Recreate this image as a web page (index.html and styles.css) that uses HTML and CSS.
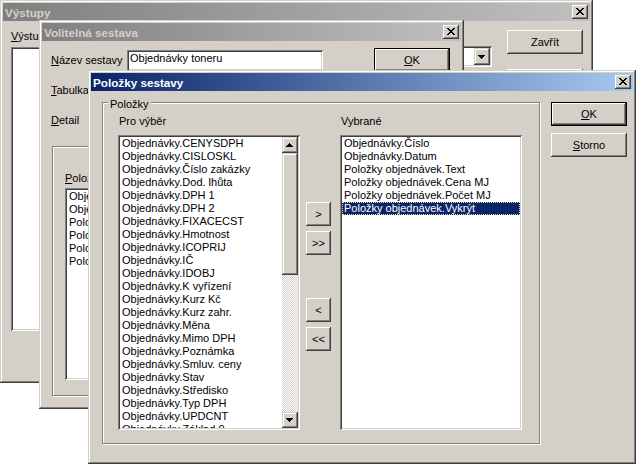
FILE: index.html
```html
<!DOCTYPE html>
<html lang="cs">
<head>
<meta charset="utf-8">
<title>Položky sestavy</title>
<link rel="stylesheet" href="styles.css">
</head>
<body>
<div class="desktop">

  <section class="win win-out">
    <header class="titlebar inactive">
      <span class="title">Výstupy</span>
      <span class="xbtn"><svg width="8" height="7" viewBox="0 0 8 7"><path d="M0 0h2v1h-2z M6 0h2v1h-2z M1 1h2v1h-2z M5 1h2v1h-2z M2 2h4v1h-4z M3 3h2v1h-2z M2 4h4v1h-4z M1 5h2v1h-2z M5 5h2v1h-2z M0 6h2v1h-2z M6 6h2v1h-2z" fill="#000"/></svg></span>
    </header>
    <div class="out-body">
      <div class="out-left">
        <div class="lbl"><u>V</u>ýstupy</div>
        <div class="sunken out-list"></div>
      </div>
      <div class="out-mid">
        <div class="sunken combo">
          <span class="combo-val"></span>
          <span class="arrow-btn"><svg width="7" height="4" viewBox="0 0 7 4"><path d="M0 0h7v1h-1v1h-1v1h-1v1h-1v-1h-1v-1h-1v-1h-1z" fill="#000"/></svg></span>
        </div>
      </div>
      <div class="out-right">
        <button class="btn">Zavřít</button>
        <button class="btn next"></button>
      </div>
    </div>
  </section>

  <section class="win win-opt">
    <header class="titlebar inactive">
      <span class="title">Volitelná sestava</span>
      <span class="xbtn"><svg width="8" height="7" viewBox="0 0 8 7"><path d="M0 0h2v1h-2z M6 0h2v1h-2z M1 1h2v1h-2z M5 1h2v1h-2z M2 2h4v1h-4z M3 3h2v1h-2z M2 4h4v1h-4z M1 5h2v1h-2z M5 5h2v1h-2z M0 6h2v1h-2z M6 6h2v1h-2z" fill="#000"/></svg></span>
    </header>
    <div class="opt-body">
      <div class="row row-name">
        <span class="row-lbl"><u>N</u>ázev sestavy</span>
        <span class="sunken textbox">Objednávky toneru</span>
        <button class="btn default opt-ok"><u>O</u>K</button>
      </div>
      <div class="row row-field">
        <span class="row-lbl"><u>T</u>abulka</span>
        <span class="sunken textbox"></span>
      </div>
      <div class="row row-field">
        <span class="row-lbl"><u>D</u>etail</span>
        <span class="sunken textbox"></span>
      </div>
      <div class="group opt-group">
        <div class="lbl"><u>P</u>olož</div>
        <div class="sunken opt-list">
          <div class="item">Obje</div>
          <div class="item">Obje</div>
          <div class="item">Polo</div>
          <div class="item">Polo</div>
          <div class="item">Polo</div>
          <div class="item">Polo</div>
        </div>
      </div>
    </div>
  </section>

  <section class="win win-items">
    <header class="titlebar">
      <span class="title">Položky sestavy</span>
      <span class="xbtn"><svg width="8" height="7" viewBox="0 0 8 7"><path d="M0 0h2v1h-2z M6 0h2v1h-2z M1 1h2v1h-2z M5 1h2v1h-2z M2 2h4v1h-4z M3 3h2v1h-2z M2 4h4v1h-4z M1 5h2v1h-2z M5 5h2v1h-2z M0 6h2v1h-2z M6 6h2v1h-2z" fill="#000"/></svg></span>
    </header>
    <div class="items-body">
      <div class="group items-group">
        <span class="legend">Položky</span>
        <div class="list-col">
          <div class="col-lbl">Pro výběr</div>
          <div class="sunken listbox">
            <div class="items">
              <div class="item">Objednávky.CENYSDPH</div>
              <div class="item">Objednávky.CISLOSKL</div>
              <div class="item">Objednávky.Číslo zakázky</div>
              <div class="item">Objednávky.Dod. lhůta</div>
              <div class="item">Objednávky.DPH 1</div>
              <div class="item">Objednávky.DPH 2</div>
              <div class="item">Objednávky.FIXACECST</div>
              <div class="item">Objednávky.Hmotnost</div>
              <div class="item">Objednávky.ICOPRIJ</div>
              <div class="item">Objednávky.IČ</div>
              <div class="item">Objednávky.IDOBJ</div>
              <div class="item">Objednávky.K vyřízení</div>
              <div class="item">Objednávky.Kurz Kč</div>
              <div class="item">Objednávky.Kurz zahr.</div>
              <div class="item">Objednávky.Měna</div>
              <div class="item">Objednávky.Mimo DPH</div>
              <div class="item">Objednávky.Poznámka</div>
              <div class="item">Objednávky.Smluv. ceny</div>
              <div class="item">Objednávky.Stav</div>
              <div class="item">Objednávky.Středisko</div>
              <div class="item">Objednávky.Typ DPH</div>
              <div class="item">Objednávky.UPDCNT</div>
              <div class="item">Objednávky.Základ 0</div>
            </div>
            <div class="vscroll">
              <span class="sb-btn"><svg width="7" height="4" viewBox="0 0 7 4"><path d="M3 0h1v1h1v1h1v1h1v1h-7v-1h1v-1h1v-1h1z" fill="#000"/></svg></span>
              <span class="sb-thumb"></span>
              <span class="sb-track"></span>
              <span class="sb-btn"><svg width="7" height="4" viewBox="0 0 7 4"><path d="M0 0h7v1h-1v1h-1v1h-1v1h-1v-1h-1v-1h-1v-1h-1z" fill="#000"/></svg></span>
            </div>
          </div>
        </div>
        <div class="move-col">
          <button class="btn move">&gt;</button>
          <button class="btn move">&gt;&gt;</button>
          <button class="btn move far">&lt;</button>
          <button class="btn move">&lt;&lt;</button>
        </div>
        <div class="list-col">
          <div class="col-lbl">Vybrané</div>
          <div class="sunken listbox">
            <div class="items">
              <div class="item">Objednávky.Číslo</div>
              <div class="item">Objednávky.Datum</div>
              <div class="item">Položky objednávek.Text</div>
              <div class="item">Položky objednávek.Cena MJ</div>
              <div class="item">Položky objednávek.Počet MJ</div>
              <div class="item sel">Položky objednávek.Vykrýt</div>
            </div>
          </div>
        </div>
      </div>
      <div class="dlg-buttons">
        <button class="btn default"><u>O</u>K</button>
        <button class="btn"><u>S</u>torno</button>
      </div>
    </div>
  </section>

</div>
</body>
</html>
```

FILE: styles.css
```css
* { box-sizing: border-box; }
html, body { margin: 0; padding: 0; }
body {
  background: #fff;
  font: 11px/13px "Liberation Sans", Arial, sans-serif;
  color: #000;
  width: 637px;
  height: 464px;
  overflow: hidden;
}
u { text-decoration: underline; text-underline-offset: 1px; }

.desktop { position: relative; width: 637px; height: 464px; }

/* window frame */
.win {
  position: absolute;
  background: #d4d0c8;
  padding: 3px;
  display: flex;
  flex-direction: column;
  box-shadow: inset -1px -1px #404040, inset 1px 1px #d4d0c8,
              inset -2px -2px #808080, inset 2px 2px #fff;
}
.win-out   { left: 0;    top: 0;    width: 593px; height: 383px; }
.win-opt   { left: 39px; top: 20px; width: 425px; height: 389px; }
.win-items { left: 88px; top: 70px; width: 548px; height: 394px; }

.titlebar {
  flex: none;
  height: 18px;
  display: flex;
  align-items: center;
  padding: 0 2px 0 2px;
  font-weight: bold;
  font-size: 11.7px;
  color: #fff;
  background: linear-gradient(to right, #0a246a, #a6caf0);
}
.titlebar.inactive {
  color: #d4d0c8;
  background: linear-gradient(to right, #808080, #c0c0c0);
}
.title { flex: 1; white-space: nowrap; overflow: hidden; }

.xbtn {
  flex: none;
  width: 16px;
  height: 14px;
  padding: 3px 0 0 4px;
  background: #d4d0c8;
  box-shadow: inset -1px -1px #404040, inset 1px 1px #fff, inset -2px -2px #808080;
}
.xbtn svg, .sb-btn svg, .arrow-btn svg { display: block; }

/* controls */
.sunken {
  background: #fff;
  padding: 2px;
  box-shadow: inset 1px 1px #808080, inset -1px -1px #fff,
              inset 2px 2px #404040, inset -2px -2px #d4d0c8;
}
.btn {
  font: inherit;
  color: #000;
  margin: 0;
  padding: 0;
  border: none;
  width: 76px;
  height: 24px;
  background: #d4d0c8;
  box-shadow: inset -1px -1px #404040, inset 1px 1px #fff, inset -2px -2px #808080;
  text-align: center;
}
.btn.default {
  border: 1px solid #000;
  box-shadow: inset -1px -1px #404040, inset 1px 1px #fff, inset -2px -2px #808080;
}

.lbl { height: 13px; white-space: nowrap; }

/* window 1: Výstupy */
.out-body { flex: 1; display: flex; padding: 9px 7px 0 8px; }
.out-left { width: 250px; flex: none; }
.out-left .lbl { margin-bottom: 4px; }
.out-list { height: 284px; }
.out-mid { flex: 1; display: flex; justify-content: flex-end; padding-top: 16px; margin-right: 15px; }
.combo { width: 200px; height: 21px; display: flex; }
.combo-val { flex: 1; }
.arrow-btn {
  width: 16px;
  height: 17px;
  padding: 7px 0 0 4px;
  background: #d4d0c8;
  box-shadow: inset -1px -1px #404040, inset 1px 1px #d4d0c8, inset -2px -2px #808080, inset 2px 2px #fff;
}
.out-right { width: 76px; flex: none; display: flex; flex-direction: column; }
.out-right .next { margin-top: 15px; }

/* window 2: Volitelná sestava */
.opt-body { flex: 1; display: flex; flex-direction: column; padding: 7px 0 0 9px; }
.row { display: flex; align-items: center; }
.row-name { height: 24px; }
.row-field { height: 21px; margin-top: 8px; }
.row-field + .row-field { margin-top: 9px; }
.row-lbl { width: 76px; white-space: nowrap; }
.textbox { width: 196px; height: 21px; padding: 2px 3px 0 3px; white-space: nowrap; }
.row-name .textbox { align-self: flex-start; margin-top: 2px; }
.opt-ok { margin-left: 51px; }
.group {
  position: relative;
  border: 1px solid #808080;
  box-shadow: inset 1px 1px #fff, 1px 1px #fff;
}
.opt-group { margin: 15px 0 0 1px; width: 400px; height: 250px; padding: 25px 0 0 12px; }
.opt-group .lbl { margin-bottom: 3px; }
.opt-list { width: 40px; height: 192px; overflow: hidden; }

/* window 3: Položky sestavy */
.items-body { flex: 1; display: flex; padding: 11px 0 0 11px; }
.items-group { flex: none; width: 438px; height: 342px; padding: 12px 17px 0 15px; display: flex; }
.legend { position: absolute; top: -5px; left: 5px; padding: 0 2px; background: #d4d0c8; }
.list-col { width: 182px; flex: none; display: flex; flex-direction: column; }
.col-lbl { height: 13px; padding-left: 1px; margin-bottom: 7px; }
.listbox { height: 295px; display: flex; }
.items { flex: 1; overflow: hidden; }
.item { height: 13px; padding: 0 2px; white-space: nowrap; overflow: hidden; }
.item.sel {
  background: #0a246a;
  color: #fff;
  outline: 1px dotted #f5db95;
  outline-offset: -1px;
}
.vscroll { width: 16px; flex: none; display: flex; flex-direction: column; }
.sb-btn {
  flex: none;
  width: 16px;
  height: 16px;
  padding: 6px 0 0 4px;
  background: #d4d0c8;
  box-shadow: inset -1px -1px #404040, inset 1px 1px #d4d0c8, inset -2px -2px #808080, inset 2px 2px #fff;
}
.sb-thumb {
  flex: none;
  height: 122px;
  background: #d4d0c8;
  box-shadow: inset -1px -1px #404040, inset 1px 1px #d4d0c8, inset -2px -2px #808080, inset 2px 2px #fff;
}
.sb-track {
  flex: 1;
  background: repeating-conic-gradient(#fff 0 25%, #d4d0c8 0 50%) 0 0 / 2px 2px;
}
.move-col { width: 25px; flex: none; margin: 0 9px 0 6px; padding-top: 87px; display: flex; flex-direction: column; }
.btn.move { width: 25px; height: 24px; margin-bottom: 5px; font-size: 11px; letter-spacing: 0; }
.btn.move.far { margin-top: 38px; }
.dlg-buttons { margin-left: 11px; display: flex; flex-direction: column; gap: 7px; }
```
